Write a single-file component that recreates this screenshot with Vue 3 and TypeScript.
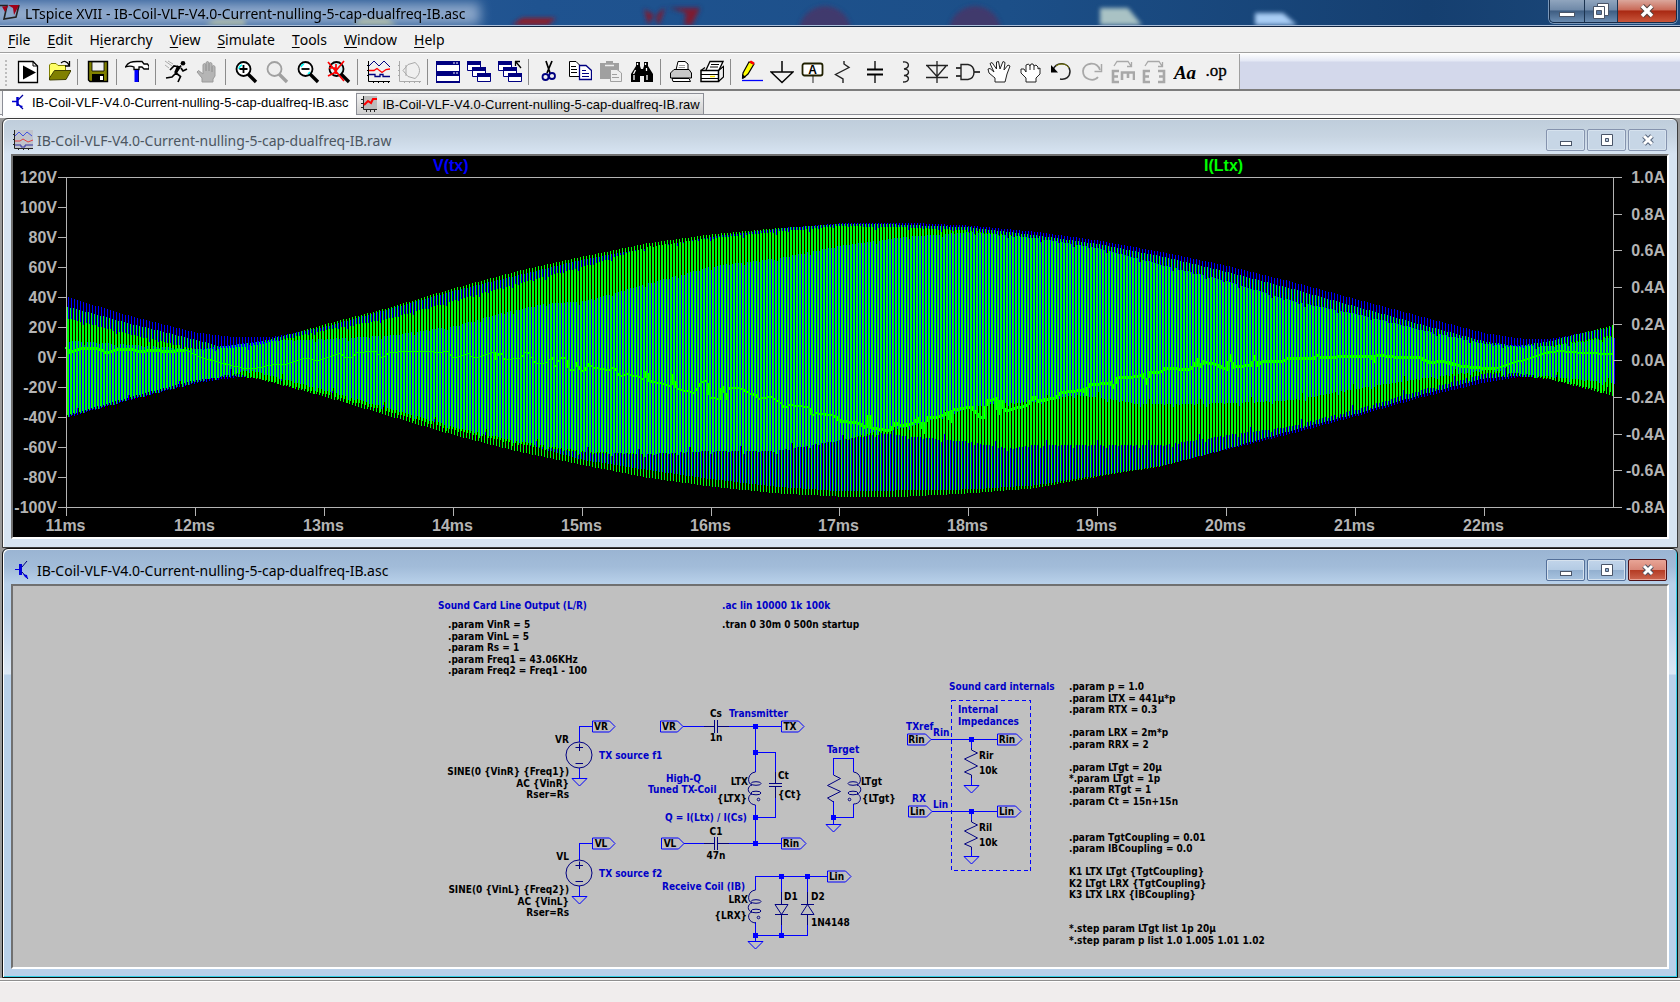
<script setup lang="ts">
type Point = [number, number]
interface Menu { pre: string; key: string; post: string }
interface Tool { name: string; art: string; gapAfter?: boolean }
interface Label { x: number; y: number; t: string; c?: 'b' | 'k'; a?: 'start' | 'middle' | 'end' }
interface Flag { x: number; y: number; w: number; t: string }

const docName = 'IB-Coil-VLF-V4.0-Current-nulling-5-cap-dualfreq-IB'

const menus: Menu[] = [
  { pre: '', key: 'F', post: 'ile' },
  { pre: '', key: 'E', post: 'dit' },
  { pre: 'H', key: 'i', post: 'erarchy' },
  { pre: '', key: 'V', post: 'iew' },
  { pre: '', key: 'S', post: 'imulate' },
  { pre: '', key: 'T', post: 'ools' },
  { pre: '', key: 'W', post: 'indow' },
  { pre: '', key: 'H', post: 'elp' },
]

const lens = (stroke: string, glass: string, inner: string) =>
  `<path d="M14 14L22 22" stroke="${stroke}" stroke-width="3.4"/><circle cx="9.5" cy="9" r="7" fill="${glass}" stroke="${stroke}" stroke-width="1.8"/>${inner}`
const cascade = (extra: string) =>
  `<g fill="#fff" stroke="#000080" stroke-width="1"><path d="M0.5 1.5h13v9h-13z"/><path d="M5.5 7.5h13v9h-13z"/><path d="M10.5 13.5h13v8h-13z"/></g><g fill="#000080"><path d="M0 1h14v4H0zM5 7h14v4H5zM10 13h14v4H10z"/></g>${extra}`
const handArt = (fill: string, stroke: string) =>
  `<path d="M7 22V18L2 12L3.500 10.500L8 14V4.500L9.500 3.500L11 4.500V11V2.500L12.500 1.500L14 2.500V11V3.500L15.500 2.500L17 3.500V12V6.500L18.500 5.500L20 6.500V16L18 19V22z" fill="${fill}" stroke="${stroke}"/>`

const tools: Tool[] = [
  { name: 'Run schematic', art: '<path d="M2.500 1.500H17L21.500 6V22.500H2.500z" fill="#fff" stroke="#000" stroke-width="1.300"/><path d="M17 1.500V6H21.500" fill="none" stroke="#000"/><path d="M7 5.500L20 12.500L7 19.500z"/>' },
  { name: 'Open', gapAfter: true, art: '<path d="M2.500 20V5L4 3.500H9L11 5.500H18.500V10" fill="#ffff66" stroke="#808000"/><path d="M2.500 20V18L7.500 10.500H24L19 19.500z" fill="#808000" stroke="#404000"/><path d="M14 3C17 .5 20 1 22 5M22.500 1V6H18" fill="none" stroke="#000" stroke-width="1.300"/>' },
  { name: 'Save', gapAfter: true, art: '<path d="M2.500 1.500H21.500V21.500H4L2.500 20z" fill="#808000" stroke="#000" stroke-width="1.400"/><path d="M6 2H18V11H6z" fill="#efefef" stroke="#000" stroke-width=".8"/><path d="M6 14H18V21H6z"/><path d="M14 16H17V20H14z" fill="#fff"/>' },
  { name: 'Control panel', gapAfter: true, art: '<path d="M0.500 7C3 2 7 1.500 12 1.500H17L19 4H22.500L24 6V9H19L17 7H14V9.500H9V7C6 5.500 3 6 0.500 7z" fill="#fff" stroke="#000" stroke-width="1.300"/><path d="M9.500 10H13.500V22H9.500z" fill="#0000ff"/><path d="M13.500 10V22" stroke="#000080"/>' },
  { name: 'Run', art: '<circle cx="19" cy="3.200" r="2.300"/><path d="M17 5.500L12 13L16.500 16.500L14 22M12 13L8 17L2 18M16 7L10 6L6 10M17 8L19 11L23 9" fill="none" stroke="#000" stroke-width="1.700"/><path d="M14.500 6L11.500 13" stroke="#000" stroke-width="3"/><path d="M1 1L8 6M4 1L9 4M1 5L5 8" stroke="#999" stroke-width=".8"/>' },
  { name: 'Halt', gapAfter: true, art: handArt('#b5b5b5', '#9a9a9a') },
  { name: 'Zoom in', art: lens('#000', '#fff', '<path d="M5 9a4.500 4.500 0 0 1 3-4" fill="none" stroke="#00ffff" stroke-width="1.500"/><path d="M9.500 5V13M5.500 9H13.500" stroke="#000" stroke-width="1.800"/>') },
  { name: 'Pan', art: lens('#a0a0a0', '#eee', '') },
  { name: 'Zoom back', art: lens('#000', '#fff', '<path d="M5 7a4.500 4.500 0 0 1 3-3M12 14l2-2" fill="none" stroke="#00ffff" stroke-width="1.500"/><path d="M5.500 9H13.500" stroke="#000" stroke-width="1.800"/>') },
  { name: 'Zoom full extents', gapAfter: true, art: lens('#000', '#d8f4f4', '<path d="M1 2L17 21M17 1L7 13L1 16M2 8H9M9 4V14" fill="none" stroke="#ff0000" stroke-width="1.700"/>') },
  { name: 'Autorange', art: '<path d="M2.500 1V21.500H24M1 5.500H3M1 10.500H3M1 15.500H3M7.500 21V23M12.500 21V23M17.500 21V23M22.500 21V23" fill="none" stroke="#000"/><path d="M3 6L8 1L13 6L18 1L24 7" fill="none" stroke="#000080"/><path d="M3 10.500H8L11 8.500L16 12.500L20 9.500L24 9" fill="none" stroke="#ff0000" stroke-width="1.300"/><path d="M3 14.500H9V16.500H14V14.500H17V16.500H24" fill="none" stroke="#000080" stroke-width="1.300"/>' },
  { name: 'Nyquist', gapAfter: true, art: '<path d="M2.500 1V21.500H24M1 5.500H3M1 10.500H3M1 15.500H3M7.500 21V23M12.500 21V23M17.500 21V23M22.500 21V23" fill="none" stroke="#aaa"/><path d="M6 10.500L11 4.500L18 2.500C24 7 24 14 18 18.500L11 16.500zM9 5V16" fill="none" stroke="#aaa"/>' },
  { name: 'Tile windows', art: '<path d="M0.500 1.500H23.500V22.500H0.500z" fill="#fff" stroke="#000080"/><path d="M0 1H24V5H0zM0 11H24V16H0zM0 21H24V23H0z" fill="#000080"/><path d="M17 3H19M20 3H22M17 13H19M20 13H22" stroke="#fff"/>' },
  { name: 'Cascade', art: cascade('') },
  { name: 'Close all', gapAfter: true, art: cascade('<path d="M17 1.500H22M17.500 1V6M18 2L23 8" fill="none" stroke="#000" stroke-width="1.300"/>') },
  { name: 'Cut', art: '<path d="M9 1L13 13M15 1L10 13" stroke="#000" stroke-width="1.700"/><circle cx="8.500" cy="17" r="3" fill="none" stroke="#000080" stroke-width="1.800"/><circle cx="15" cy="16" r="3" fill="none" stroke="#000080" stroke-width="1.800"/>' },
  { name: 'Copy', art: '<path d="M1.500 1.500H8L12.500 6V16.500H1.500z" fill="#fff" stroke="#000"/><path d="M3 6.500H8M3 9.500H9M3 12.500H9" stroke="#000"/><path d="M11.500 5.500H18L23.500 10.500V19.500H11.500z" fill="#fff" stroke="#000080" stroke-width="1.300"/><path d="M14 10.500H18M14 13.500H21M14 16.500H21" stroke="#000080"/>' },
  { name: 'Paste', art: '<path d="M1 3H7V1H14V3H20V19H1z" fill="#a0a0a0"/><path d="M6 5.500H15" stroke="#eee" stroke-width="1.500"/><path d="M11.500 9.500H18L22.500 13V21.500H11.500z" fill="#eee" stroke="#a0a0a0"/><path d="M13 14.500H18M13 17.500H20" stroke="#a0a0a0"/>' },
  { name: 'Find', gapAfter: true, art: '<path d="M6 2H10V6L11 9H13L14 6V2H18V6L23 14V22H14V16H10V22H1V14L6 6z"/><path d="M7.500 3V5M15.500 3V5M5.500 10L3.500 14M16.500 8V11M4 15V20M17 15V20" stroke="#fff" stroke-width="1.300"/>' },
  { name: 'Print setup', art: '<path d="M7 10L9 1.500H16L19 4V10" fill="#fff" stroke="#000"/><path d="M1.500 13L5 9.500H20L22.500 13V18H1.500z" fill="#c8c8c8" stroke="#000"/><path d="M3 18.500H20L21.500 21.500H4z" fill="#fff" stroke="#000"/><path d="M10 5.500H16M9.500 7.500H16" stroke="#999"/>' },
  { name: 'Print', gapAfter: true, art: '<path d="M6 10L10 1.500H23L19 10" fill="#fff" stroke="#000" stroke-width="1.300"/><path d="M11 4.500H19M10 7H18" stroke="#000"/><path d="M1 10.500H18.500V21.500H1z" fill="#fff" stroke="#000" stroke-width="1.500"/><path d="M1 14.500H18M1 18.500H18M18.500 10.500L23.500 6.500V17L18.500 21.500M1 10.500L5 7.500" fill="none" stroke="#000" stroke-width="1.200"/><path d="M10 16.500H15" stroke="#ffe600" stroke-width="1.500"/>' },
  { name: 'Wire', art: '<path d="M3.500 18L4 13L10 2L15 4L9 14L4.500 18z" fill="#ffff00" stroke="#000" stroke-width="1.200"/><path d="M10 2L12 0.500L15.500 2.500L14.500 5z" fill="#ff0000"/><path d="M3 19V14L7 17z"/><path d="M3 20.500H24" stroke="#0000ff" stroke-width="1.300"/>' },
  { name: 'Ground', art: '<path d="M12 1V12M1 12H23L12 22.500z" fill="none" stroke="#000" stroke-width="1.500"/>' },
  { name: 'Label net', art: '<path d="M12 16V23" stroke="#555" stroke-width="1.300"/><rect x="1.500" y="3.500" width="20" height="12" rx="2" fill="#fff" stroke="#202000" stroke-width="1.800"/><text x="11.500" y="14" font-size="12" font-weight="bold" text-anchor="middle" font-family="Liberation Sans, sans-serif">A</text>' },
  { name: 'Resistor', art: '<path d="M12 1V4L17 7.500L3.500 14.500L11 19V23" fill="none" stroke="#222" stroke-width="1.400"/>' },
  { name: 'Capacitor', art: '<path d="M12 1V10M12 15V23" stroke="#000" stroke-width="1.300"/><path d="M4 9.500H20M4 14.500H20" stroke="#000" stroke-width="2"/>' },
  { name: 'Inductor', art: '<path d="M9 2C16 1 16 8 10 9C16 9 16 15 10 15.500C16 16 16 22 9 22" fill="none" stroke="#222" stroke-width="1.400"/>' },
  { name: 'Diode', art: '<path d="M12 1V23M1 5.500H23M1 17.500H23M2.500 6L12 16.500L21 6" fill="none" stroke="#222" stroke-width="1.300"/>' },
  { name: 'Component', art: '<path d="M0 8H5M0 16H5M18 12H24" stroke="#000" stroke-width="1.400"/><path d="M5 4.500H12C20 6 20 18 12 19.500H5z" fill="#eee" stroke="#222" stroke-width="1.400"/>' },
  { name: 'Move', art: '<path d="M8 22V18L2 13L1 9L3 8.500L7 12L3 3.500L5 2.500L9.500 9L9.500 2L11.500 1.500L13 9L16 1.500L18 2.500L17 10L21 5L23 6L20 14L18 22z" fill="#fff" stroke="#222"/>' },
  { name: 'Drag', art: '<path d="M8 22V18L3 13L3 9L6 9L8 12V5L10.500 4L12 6L13 4L15 4L16 6L18 5L20 7V9L22 8L22 14L18 18V22z" fill="#fff" stroke="#222"/><path d="M12 6V10M16 6V10" stroke="#222"/>' },
  { name: 'Undo', art: '<path d="M4 10C7 1 20 2 21 11C21 17 17 20 11 19" fill="none" stroke="#222" stroke-width="1.500"/><path d="M7 6C11 3 17 3 20 8" fill="none" stroke="#808000"/><path d="M2 5V12.500H9z"/>' },
  { name: 'Redo', art: '<path d="M20 10C17 1 4 2 3 11C3 20 14 22 18 17" fill="none" stroke="#a8a8a8" stroke-width="1.800"/><path d="M21.500 4V11.500H14.500" fill="none" stroke="#a8a8a8" stroke-width="1.500"/>' },
  { name: 'Rotate', art: '<path d="M3 6L6 1.500H17L20 6M20.500 2V6.500H16" fill="none" stroke="#a8a8a8" stroke-width="1.300"/><path d="M8 11H2V22H8M2 16.500H7M11 20V12.500H23V20M17 12V18" fill="none" stroke="#a8a8a8" stroke-width="2.600"/>' },
  { name: 'Mirror', art: '<path d="M3 6L6 1.500H17L20 6M20.500 2V6.500H16" fill="none" stroke="#a8a8a8" stroke-width="1.300"/><path d="M8 11H2V22H8M2 16.500H7M16 11H22V22H16M22 16.500H17" fill="none" stroke="#a8a8a8" stroke-width="2.600"/>' },
  { name: 'Text', art: '<text x="12" y="19" font-size="19" font-weight="bold" font-style="italic" text-anchor="middle" font-family="Liberation Serif, serif">Aa</text>' },
  { name: 'SPICE directive', art: '<text x="12" y="16" font-size="17" stroke="#000" stroke-width=".3" text-anchor="middle" font-family="Liberation Serif, serif">.op</text>' },
]

/* ---- waveform pane ---- */
const X0 = 66.5
const MS = 128.9
const leftAxis = Array.from({ length: 12 }, (_, i) => ({ y: 177.5 + i * 30, t: `${120 - i * 20}V` }))
const rightAxis = Array.from({ length: 10 }, (_, i) => ({ y: Math.round(177 + (i * 330) / 9) + 0.5, t: `${((10 - i * 2) / 10).toFixed(1)}A` }))
const timeAxis = Array.from({ length: 12 }, (_, i) => ({ x: Math.floor(X0 + i * MS) + 0.5, t: `${11 + i}ms` }))

// Envelope curves: time in ms against thirds of a pixel below the pane's top
const env: Record<string, Point[]> = {
  gTop: [[11, 500], [11.5, 552], [12, 600], [12.2, 620], [12.5, 605], [12.7, 586], [13, 553], [13.5, 503], [14, 445], [14.5, 393], [15, 350], [15.5, 310], [16, 283], [16.5, 265], [17, 252], [17.4, 253], [18, 262], [18.5, 285], [19, 312], [19.5, 350], [20, 396], [20.5, 446], [21, 500], [21.5, 553], [22, 605], [22.25, 618], [22.5, 604], [23, 555]],
  bTop: [[11, 472], [11.5, 530], [12, 578], [12.3, 592], [12.6, 590], [13, 560], [14, 452], [15, 358], [16, 290], [16.6, 262], [17, 250], [17.5, 248], [18, 257], [18.5, 275], [19, 302], [19.5, 337], [20, 378], [20.5, 426], [21, 478], [21.5, 530], [22, 580], [22.3, 597], [22.5, 597], [23, 560]],
  gInT: [[11, 535], [11.5, 585], [12, 628], [12.4, 620], [13, 570], [13.5, 535], [14, 482], [14.5, 430], [15, 380], [15.5, 320], [16, 294], [16.5, 275], [17, 258], [17.5, 262], [18, 272], [18.5, 294], [19, 325], [19.5, 376], [20, 425], [20.5, 484], [21, 522], [21.5, 570], [22, 612], [22.25, 620], [22.5, 618], [23, 585]],
  bInT: [[11, 602], [12, 628], [12.5, 602], [13, 597], [13.5, 586], [14, 558], [14.3, 525], [14.7, 490], [15, 484], [15.2, 462], [15.5, 430], [16, 378], [16.5, 355], [17, 316], [17.5, 290], [18, 276], [18.5, 294], [19, 325], [19.5, 376], [20, 425], [20.5, 484], [21, 522], [21.5, 570], [22, 612], [22.5, 618], [23, 590]],
  bInB: [[11, 828], [12, 725], [12.4, 690], [13, 752], [14, 862], [14.5, 905], [15, 935], [15.5, 942], [16, 932], [16.5, 932], [17, 900], [17.3, 872], [17.5, 862], [18, 803], [18.2, 790], [18.5, 786], [18.8, 765], [19, 772], [19.3, 792], [20, 790], [20.5, 780], [21, 745], [21.5, 715], [22, 690], [22.5, 710], [23, 730]],
  gInB: [[11, 822], [12, 720], [12.3, 700], [13, 762], [14, 870], [14.5, 912], [15, 937], [15.5, 942], [16, 932], [16.5, 932], [17, 900], [17.3, 880], [17.6, 892], [18, 905], [18.3, 926], [18.5, 915], [19, 915], [19.5, 915], [20, 885], [20.5, 858], [21, 808], [21.5, 750], [22, 700], [22.3, 700], [23, 760]],
  bBot: [[11, 832], [11.5, 778], [12, 729], [12.3, 712], [12.5, 708], [13, 752], [14, 862], [14.5, 908], [15, 960], [15.5, 990], [16, 1018], [16.5, 1040], [17, 1054], [18, 1048], [18.5, 1036], [19, 1006], [19.5, 976], [20, 928], [20.5, 880], [21, 828], [21.5, 772], [22, 727], [22.25, 712], [22.5, 708], [23, 735]],
  gBot: [[11, 826], [11.5, 770], [12, 720], [12.3, 708], [12.5, 718], [13, 770], [13.5, 828], [14, 885], [14.5, 935], [15, 975], [15.5, 1013], [16, 1040], [16.5, 1060], [17, 1070], [17.5, 1070], [18, 1060], [18.5, 1045], [19, 1010], [19.5, 978], [20, 926], [20.5, 872], [21, 822], [21.5, 765], [22, 715], [22.25, 708], [22.5, 718], [23, 768]],
}
function sample(name: string, t: number): number {
  const pts = env[name]
  let i = 0
  while (i < pts.length - 2 && pts[i + 1][0] < t) i++
  const [ta, ya] = pts[i]
  const [tb, yb] = pts[i + 1]
  return Math.round(140 + (ya + ((yb - ya) * (t - ta)) / (tb - ta)) / 3)
}
const wobble = (i: number) => (i % 17 === 3 ? -5 : i % 11 === 5 ? 3 : (i * 7) % 5 === 0 ? 1 : 0)
const vbar = (px: number, a: number, b: number) => (b > a ? `M${px} ${a}h1V${b}h-1z` : '')
let blue = ''
let green = ''
for (let x = 67, i = 0; x <= 1612; x += 3, i++) {
  const t = 11 + (x - X0) / MS
  const w = wobble(i)
  const gBot = sample('gBot', t)
  const outer = Math.max(gBot, sample('bBot', t))
  const bInT = sample('bInT', t) + Math.max(w, 0)
  const bInB = Math.min(sample('bInB', t) + w, outer)
  const gInB = Math.min(Math.max(sample('gInB', t) + w, bInB), outer)
  blue += vbar(x + 1, sample('bTop', t), sample('bBot', t)) + vbar(x + 2, bInT, bInB)
  green += vbar(x, sample('gTop', t), gBot) + vbar(x + 1, sample('gInT', t) + Math.max(w, 0), gInB)
}

const traceA: Point[] = [[66, 347], [70, 352], [85, 348], [97, 348], [107, 353], [115, 350], [130, 349], [139, 352], [153, 350], [168, 352], [186, 350]]
const traceB: Point[] = [[186, 350], [200, 357], [221, 363], [243, 368], [254, 369], [271, 365], [286, 364], [296, 361], [307, 358], [318, 361], [329, 357], [341, 353], [345, 358], [352, 357], [357, 353], [375, 351], [382, 358], [389, 353], [407, 351], [432, 351], [436, 353], [448, 351], [452, 358], [462, 356], [468, 353], [473, 358], [479, 357], [495, 352], [496, 360], [500, 351], [505, 360], [521, 358], [527, 351], [536, 364], [546, 363], [552, 357], [555, 367], [560, 358]]
const traceC: Point[] = [[560, 358], [566, 358], [569, 370], [574, 370], [577, 363], [581, 371], [585, 370], [589, 364], [594, 368], [610, 370], [614, 367], [620, 377], [626, 374], [639, 377], [644, 380], [647, 370], [649, 381], [664, 384], [671, 387], [673, 377], [677, 389], [694, 393], [701, 383], [707, 380], [710, 398], [720, 399], [722, 384], [726, 398], [729, 388], [740, 388], [753, 395], [755, 393], [758, 399], [771, 397], [781, 403], [785, 408], [789, 405], [809, 407], [812, 416], [816, 413], [835, 416]]
const traceD: Point[] = [[835, 416], [840, 421], [858, 423], [866, 428], [869, 415], [871, 428], [890, 431], [896, 423], [901, 426], [912, 424], [918, 419], [924, 430], [927, 418], [939, 417], [948, 413], [951, 423], [953, 410], [971, 407], [980, 417], [984, 417], [987, 401], [996, 399], [999, 415], [1001, 400], [1005, 411], [1021, 407], [1028, 405], [1034, 397], [1039, 401], [1056, 398], [1060, 393], [1083, 390], [1086, 393], [1089, 385], [1110, 383], [1114, 387], [1117, 378], [1134, 377], [1143, 375], [1147, 383], [1149, 373], [1161, 372], [1166, 368], [1190, 370], [1197, 361], [1199, 367], [1204, 362], [1213, 364], [1227, 369], [1230, 357], [1234, 367], [1252, 365], [1254, 357], [1258, 365], [1263, 361], [1284, 361], [1288, 358], [1315, 358], [1317, 355], [1320, 357], [1338, 357], [1370, 356], [1374, 360], [1376, 355], [1395, 357], [1420, 358], [1431, 363], [1443, 361], [1459, 366], [1481, 368], [1493, 369]]
const traceE: Point[] = [[1493, 369], [1513, 363], [1531, 358], [1545, 353], [1559, 351], [1584, 353], [1613, 354]]
const line = (pts: Point[]) => pts.map((p) => p.join(',')).join(' ')
const traces = [
  { w: 3, p: line(traceA) }, { w: 1, p: line(traceB) }, { w: 2, p: line(traceC) }, { w: 3, p: line(traceD) }, { w: 2, p: line(traceE) },
]

/* ---- schematic pane ---- */
const directives: [number, string][] = [
  [690, '.param p = 1.0'], [702, '.param LTX = 441µ*p'], [713, '.param RTX = 0.3'], [736, '.param LRX = 2m*p'], [748, '.param RRX = 2'],
  [771, '.param LTgt = 20µ'], [782, '*.param LTgt = 1p'], [793, '.param RTgt = 1'], [805, '.param Ct = 15n+15n'], [841, '.param TgtCoupling = 0.01'],
  [852, '.param IBCoupling = 0.0'], [875, 'K1 LTX LTgt {TgtCoupling}'], [887, 'K2 LTgt LRX {TgtCoupling}'], [898, 'K3 LTX LRX {IBCoupling}'],
  [932, '*.step param LTgt list 1p 20µ'], [944, '*.step param p list 1.0 1.005 1.01 1.02'],
]
const labels: Label[] = [
  { x: 438, y: 609, t: 'Sound Card Line Output (L/R)', c: 'b' },
  { x: 448, y: 628, t: '.param VinR = 5' }, { x: 448, y: 640, t: '.param VinL = 5' }, { x: 448, y: 651, t: '.param Rs = 1' },
  { x: 448, y: 663, t: '.param Freq1 = 43.06KHz' }, { x: 448, y: 674, t: '.param Freq2 = Freq1 - 100' },
  { x: 722, y: 609, t: '.ac lin 10000 1k 100k', c: 'b' }, { x: 722, y: 628, t: '.tran 0 30m 0 500n startup' },
  { x: 569, y: 743, t: 'VR', a: 'end' }, { x: 569, y: 775, t: 'SINE(0 {VinR} {Freq1})', a: 'end' }, { x: 569, y: 787, t: 'AC {VinR}', a: 'end' }, { x: 569, y: 798, t: 'Rser=Rs', a: 'end' },
  { x: 599, y: 759, t: 'TX source f1', c: 'b' },
  { x: 569, y: 860, t: 'VL', a: 'end' }, { x: 569, y: 893, t: 'SINE(0 {VinL} {Freq2})', a: 'end' }, { x: 569, y: 905, t: 'AC {VinL}', a: 'end' }, { x: 569, y: 916, t: 'Rser=Rs', a: 'end' },
  { x: 599, y: 877, t: 'TX source f2', c: 'b' },
  { x: 716, y: 717, t: 'Cs', a: 'middle' }, { x: 729, y: 717, t: 'Transmitter', c: 'b' }, { x: 716, y: 741, t: '1n', a: 'middle' },
  { x: 666, y: 782, t: 'High-Q', c: 'b' }, { x: 648, y: 793, t: 'Tuned TX-Coil', c: 'b' },
  { x: 748, y: 785, t: 'LTX', a: 'end' }, { x: 747, y: 802, t: '{LTX}', a: 'end' }, { x: 778, y: 779, t: 'Ct' }, { x: 778, y: 798, t: '{Ct}' },
  { x: 665, y: 821, t: 'Q = I(Ltx) / I(Cs)', c: 'b' }, { x: 716, y: 835, t: 'C1', a: 'middle' }, { x: 716, y: 859, t: '47n', a: 'middle' },
  { x: 662, y: 890, t: 'Receive Coil (IB)', c: 'b' }, { x: 748, y: 903, t: 'LRX', a: 'end' }, { x: 747, y: 919, t: '{LRX}', a: 'end' },
  { x: 784, y: 900, t: 'D1' }, { x: 811, y: 900, t: 'D2' }, { x: 811, y: 926, t: '1N4148' },
  { x: 827, y: 753, t: 'Target', c: 'b' }, { x: 861, y: 785, t: 'LTgt' }, { x: 862, y: 802, t: '{LTgt}' },
  { x: 949, y: 690, t: 'Sound card internals', c: 'b' }, { x: 958, y: 713, t: 'Internal', c: 'b' }, { x: 958, y: 725, t: 'Impedances', c: 'b' },
  { x: 906, y: 730, t: 'TXref', c: 'b' }, { x: 933, y: 736, t: 'Rin', c: 'b' }, { x: 979, y: 759, t: 'Rir' }, { x: 979, y: 774, t: '10k' },
  { x: 912, y: 802, t: 'RX', c: 'b' }, { x: 933, y: 808, t: 'Lin', c: 'b' }, { x: 979, y: 831, t: 'Ril' }, { x: 979, y: 846, t: '10k' },
  ...directives.map(([y, t]) => ({ x: 1069, y, t })),
]
const flags: Flag[] = [
  { x: 592.5, y: 726.5, w: 17, t: 'VR' }, { x: 660.5, y: 726.5, w: 17, t: 'VR' }, { x: 781.5, y: 726.5, w: 17, t: 'TX' },
  { x: 592.5, y: 843.5, w: 17, t: 'VL' }, { x: 661.5, y: 843.5, w: 17, t: 'VL' }, { x: 781.5, y: 843.5, w: 19, t: 'Rin' },
  { x: 827.5, y: 876.5, w: 18, t: 'Lin' }, { x: 907.5, y: 739.5, w: 18, t: 'Rin' }, { x: 997.5, y: 739.5, w: 19, t: 'Rin' },
  { x: 908.5, y: 811.5, w: 18, t: 'Lin' }, { x: 997.5, y: 811.5, w: 18, t: 'Lin' },
]
const junctions: Point[] = [[755, 726], [755, 752], [755, 817], [755, 843], [781, 876], [807, 876], [755, 935], [781, 935], [833, 817], [971, 739], [971, 811]]
const grounds: Point[] = [[579.5, 778.5], [579.5, 896.5], [755.5, 941.5], [833.5, 824.5], [971.5, 785.5], [971.5, 856.5]]
</script>

<template>
  <div class="app">
    <header class="titlebar">
      <svg class="backdrop" viewBox="0 0 1680 25" preserveAspectRatio="none" aria-hidden="true">
        <defs><filter id="soft" x="-20%" y="-60%" width="140%" height="220%"><feGaussianBlur stdDeviation="2" /></filter>
          <filter id="glow" x="-10%" y="-60%" width="120%" height="220%"><feGaussianBlur stdDeviation="6" /></filter></defs>
        <rect x="-10" y="3" width="490" height="22" fill="#b4c6df" opacity=".72" filter="url(#glow)" />
        <g filter="url(#soft)">
          <path d="M205 25h40v-5h-30zM352 25l10-6h25l10 6z" fill="#d9d9a0" opacity=".6" />
          <path d="M512 25l10-7h34l-8 7z" fill="#8c1a2c" />
          <path d="M644 9l10 6-6 10M665 8c-10 5-10 13-6 17M670 8h30l-8 17h-8l2-12z" fill="#7e1a33" stroke="#3b2f56" />
          <circle cx="825" cy="32" r="26" fill="#4a3566" opacity=".8" /><circle cx="975" cy="32" r="26" fill="#4a3566" opacity=".8" />
          <path d="M1100 25V8h28l14 17z" fill="#a9c2c4" /><path d="M1255 25V13h28l14 12z" fill="#a9cdf5" />
        </g>
      </svg>
      <svg class="logo" width="22" height="24" viewBox="0 0 22 24" aria-hidden="true">
        <path d="M0 4.500H7L4 18L16 16L19 4" fill="none" stroke="#222" stroke-width="1.600" /><path d="M2 5.500L8 5L5 11zM8 4H19L14 14L13 7z" fill="#a00018" />
      </svg>
      <h1>LTspice XVII - {{ docName }}.asc</h1>
      <div class="appbtns">
        <button aria-label="Minimize"><svg width="18" height="16" viewBox="0 0 18 16"><rect x="1.500" y="9.500" width="15" height="4" fill="#fff" stroke="#4a5568" /></svg></button>
        <button aria-label="Restore"><svg width="18" height="18" viewBox="0 0 18 18"><path d="M5.500 1.500h11v12h-11z" fill="#fff" stroke="#4a5568" /><path d="M1.500 4.500h11v12h-11z" fill="#fff" stroke="#4a5568" /><path d="M4.500 8.500h5v4h-5z" fill="#5b7ba4" stroke="#4a5568" /></svg></button>
        <button class="close" aria-label="Close"><svg width="18" height="16" viewBox="0 0 18 16"><path d="M4 3L14 13M14 3L4 13" stroke="#54433f" stroke-width="5.500" /><path d="M4 3L14 13M14 3L4 13" stroke="#fff" stroke-width="3.500" /></svg></button>
      </div>
    </header>

    <nav class="menu">
      <button v-for="m in menus" :key="m.pre + m.key + m.post">{{ m.pre }}<u>{{ m.key }}</u>{{ m.post }}</button>
    </nav>

    <div class="toolrow">
      <div class="toolbar" role="toolbar" aria-label="Main">
        <button v-for="t in tools" :key="t.name" :aria-label="t.name" :class="{ gap: t.gapAfter }">
          <svg width="24" height="24" viewBox="0 0 24 24" fill="#000" v-html="t.art"></svg>
        </button>
      </div>
    </div>

    <div class="tabs" role="tablist">
      <button class="tab on" role="tab" aria-selected="true">
        <svg width="16" height="16" viewBox="0 0 16 16" fill="none" aria-hidden="true"><path d="M0 7.500h5" stroke="#0000d0" stroke-width="1.500" /><path d="M5.500 3v9" stroke="#0000d0" stroke-width="2.500" /><path d="M6 6l5-5M6 10l5 5" stroke="#0000a0" stroke-width="1.300" /><path d="M7 11l4 1-2 2z" fill="#0000d0" /></svg>
        {{ docName }}.asc
      </button>
      <button class="tab" role="tab" aria-selected="false">
        <svg width="16" height="16" viewBox="0 0 16 16" fill="none" aria-hidden="true"><path d="M2 0h14v13H2z" fill="#bbb" /><path d="M2.500 0v13.500H16M0 3.500h2M0 7.500h2M0 11.500h2M5.500 13v3M9.500 13v3M13.500 13v3" stroke="#222" /><path d="M3 9l4-4 3 2 2-4h4" stroke="#f00" stroke-width="2" /></svg>
        {{ docName }}.raw
      </button>
    </div>

    <main class="mdi">
      <section class="win">
        <div class="caption">
          <svg class="ico" width="20" height="20" viewBox="0 0 20 20" fill="none" aria-hidden="true"><path d="M1 0h19v18H1z" fill="#bfc3cb" /><path d="M1.500 0v18.500H20M0 4.500h2M0 9.500h2M0 14.500h2M5.500 18v2M10.500 18v2M15.500 18v2" stroke="#222" /><path d="M2 6l4-4 4 4 4-4 5 4" stroke="#4050e0" /><path d="M2 11h5l3-2 5 3 5-2" stroke="#e04040" /><path d="M2 15h6v2h4v-2h8" stroke="#3030a0" /></svg>
          <h2>{{ docName }}.raw</h2>
          <div class="winbtns">
            <button aria-label="Minimize"><svg width="14" height="14" viewBox="0 0 14 14"><rect x="1.500" y="8.500" width="11" height="4" fill="#fff" stroke="#4a5568" /></svg></button>
            <button aria-label="Maximize"><svg width="14" height="14" viewBox="0 0 14 14"><path d="M1.500 1.500h11v11h-11z" fill="#fff" stroke="#4a5568" /><path d="M5.500 5.500h3v3h-3z" fill="#b9cbe0" stroke="#4a5568" /></svg></button>
            <button aria-label="Close"><svg width="14" height="14" viewBox="0 0 14 14"><path d="M3 3L11 11M11 3L3 11" stroke="#56657c" stroke-width="5" /><path d="M3 3L11 11M11 3L3 11" stroke="#fff" stroke-width="3" /></svg></button>
          </div>
        </div>
        <div class="canvas dark">
          <svg class="plot" viewBox="13 156 1654 381" role="img" aria-label="V(tx) and I(Ltx) against time">
            <g shape-rendering="crispEdges">
              <path :d="blue" fill="#0000ff" />
              <path :d="green" fill="#00ff00" />
            </g>
            <polyline v-for="(t, i) in traces" :key="i" :points="t.p" :stroke-width="t.w" stroke="#00ff00" fill="none" shape-rendering="crispEdges" />
            <path d="M58 177.500H1622M58 507.500H1622M66.500 177V508M1613.500 177V508" stroke="#b4b4b4" />
            <g class="axis">
              <g v-for="a in leftAxis" :key="a.t"><path :d="`M58 ${a.y}H66`" /><text x="57" :y="a.y + 5.5" text-anchor="end">{{ a.t }}</text></g>
              <g v-for="a in rightAxis" :key="a.t"><path :d="`M1614 ${a.y}H1622`" /><text x="1665" :y="a.y + 5.5" text-anchor="end">{{ a.t }}</text></g>
              <g v-for="a in timeAxis" :key="a.t"><path :d="`M${a.x} 508V516`" /><text :x="a.x - 1" y="531" text-anchor="middle">{{ a.t }}</text></g>
            </g>
            <text class="sig" x="433" y="171" fill="#0000ff">V(tx)</text>
            <text class="sig" x="1204" y="171" fill="#00ff00">I(Ltx)</text>
          </svg>
        </div>
      </section>

      <section class="win active">
        <div class="caption">
          <svg class="ico" width="20" height="20" viewBox="0 0 20 20" fill="none" aria-hidden="true"><path d="M2 9.500h5" stroke="#0000e0" /><path d="M7.500 4v11" stroke="#0000e0" stroke-width="3" /><path d="M9 7l5-6M9 12l6 7" stroke="#00007a" /><path d="M10 14l4 1 1 4-3-2z" fill="#0000e0" /></svg>
          <h2>{{ docName }}.asc</h2>
          <div class="winbtns">
            <button aria-label="Minimize"><svg width="14" height="14" viewBox="0 0 14 14"><rect x="1.500" y="8.500" width="11" height="4" fill="#fff" stroke="#4a5568" /></svg></button>
            <button aria-label="Maximize"><svg width="14" height="14" viewBox="0 0 14 14"><path d="M1.500 1.500h11v11h-11z" fill="#fff" stroke="#4a5568" /><path d="M5.500 5.500h3v3h-3z" fill="#8fb0d4" stroke="#4a5568" /></svg></button>
            <button class="close" aria-label="Close"><svg width="14" height="14" viewBox="0 0 14 14"><path d="M3 3L11 11M11 3L3 11" stroke="#4a5060" stroke-width="5" /><path d="M3 3L11 11M11 3L3 11" stroke="#fff" stroke-width="3" /></svg></button>
          </div>
        </div>
        <div class="canvas">
          <svg class="plot" viewBox="13 586 1654 381" role="img" aria-label="Schematic">
            <g fill="none" stroke="#0000ff" shape-rendering="crispEdges">
              <path d="M592 726.500H579.500V742M579.500 768V778M592 843.500H579.500V860M579.500 886V896" />
              <path d="M683 726.500H704M729 726.500H781M683 843.500H704M729 843.500H781M755.500 726V772M755.500 805V843M755.500 752.500H775.500V772M775.500 798V817.500H755.500" />
              <path d="M755.500 890V876.500H827M755.500 922V941M755.500 935.500H807.500V925M807.500 876V892M781.500 876V892M781.500 925V935" />
              <path d="M833.500 775V758.500H853.500V772M853.500 804V817.500H833.500M833.500 801V824M931 739.500H997M932 811.500H997M971.500 740V749M971.500 777V785M971.500 812V821M971.500 849V856" />
              <rect x="951.500" y="700.500" width="79" height="170" stroke-dasharray="4 3" />
            </g>
            <g fill="none" stroke="#0000ff"><path v-for="(g, i) in grounds" :key="i" :d="`M${g[0] - 7.5} ${g[1]}h15l-7.500 7.500z`" /></g>
            <g fill="#0000ff"><rect v-for="(j, i) in junctions" :key="i" :x="j[0] - 2" :y="j[1] - 2" width="5" height="5" /></g>
            <g fill="none" stroke="#000080">
              <path d="M704 726.500H715M718 726.500H729M704 843.500H715M718 843.500H729M714.500 720V733M717.500 720V733M714.500 837V850M717.500 837V850M769 783.500H782M769 786.500H782M775.500 772V783M775.500 787V798" />
              <g v-for="dy in [0, 118]" :key="dy" :transform="`translate(0 ${dy})`">
                <circle cx="579" cy="755" r="13" /><path d="M579.500 743.500V751M575.500 747.500H583M575.500 763.500H583" />
                <path d="M755.500 772C747 773 747 784 752 785C747 786 747 793 752 794C747 795 747 804 755.500 805" />
                <ellipse cx="756" cy="783.500" rx="5" ry="1.800" /><ellipse cx="756" cy="793" rx="5" ry="1.800" /><circle cx="758.500" cy="799.500" r="1.300" />
              </g>
              <path d="M853.500 772C862 773 862 784 857 785C862 786 862 793 857 794C862 795 862 804 853.500 804" />
              <ellipse cx="853" cy="783.500" rx="5" ry="1.800" /><ellipse cx="853" cy="793" rx="5" ry="1.800" /><circle cx="849.500" cy="799.500" r="1.300" />
              <path d="M833.500 775L840.500 778.500L827.500 785.500L840.500 791.500L827.500 798L833.500 802" />
              <path v-for="dy in [0, 72]" :key="dy" :transform="`translate(0 ${dy})`" d="M971.500 748V750L977.500 753L964.500 759L977.500 766L964.500 772L971.500 775V778" />
              <path d="M781.500 892V904.500M775 904.500H788L781.500 914.500zM775 914.500H788M781.500 914V925M807.500 892V904.500M801 904.500H814M807.500 904.500L801 914.500H814zM807.500 914V925" />
            </g>
            <g v-for="(f, i) in flags" :key="i">
              <path :d="`M${f.x} ${f.y - 5.5}h${f.w}l5.500 5.500l-5.500 5.500h-${f.w}z`" fill="#c0c0c0" stroke="#0000ff" />
              <text class="lbl" :x="f.x + f.w / 2" :y="f.y + 3.5" text-anchor="middle">{{ f.t }}</text>
            </g>
            <text v-for="(l, i) in labels" :key="i" class="lbl" :class="{ blue: l.c === 'b' }" :x="l.x" :y="l.y" :text-anchor="l.a ?? 'start'">{{ l.t }}</text>
          </svg>
        </div>
      </section>
    </main>
    <footer class="status"></footer>
  </div>
</template>

<style>
html, body { margin: 0; background: #f0eded; }
</style>

<style scoped>
* { box-sizing: border-box; }
.app { display: flex; flex-direction: column; min-height: 100vh; font-family: "Noto Sans", "Open Sans", sans-serif; font-size: 14px; color: #000; background: #f0f0f0; }
button { border: 0; padding: 0; margin: 0; background: none; font: inherit; color: inherit; display: flex; align-items: center; justify-content: center; }
h1, h2 { margin: 0; font-weight: 400; font-size: 14px; white-space: nowrap; }
svg { display: block; flex: none; }

.titlebar { position: relative; display: flex; align-items: center; height: 27px; background: linear-gradient(90deg, #3a659f 0, #1f5390 32%, #1c4f88 60%, #153f70 85%, #1d4a7c 100%); border-bottom: 1px solid #10233f; box-shadow: inset 0 -1px #a9bdd8; overflow: hidden; }
.backdrop { position: absolute; left: 0; top: 0; width: 100%; height: 25px; }
.logo { position: relative; margin-right: 3px; }
.titlebar h1 { position: relative; flex: 1; }
.appbtns { position: relative; display: flex; align-self: flex-start; height: 23px; margin-right: 3px; border: 1px solid #152c4a; border-top: 0; border-radius: 0 0 5px 5px; overflow: hidden; box-shadow: 0 0 0 1px #7b98ba; }
.appbtns button { width: 35px; background: linear-gradient(#90a5be 0, #6f89a8 45%, #3e5d82 50%, #6a8bb0 100%); border-right: 1px solid #1b3350; }
.appbtns button + button { width: 33px; }
.appbtns button.close { width: 58px; border-right: 0; background: linear-gradient(#dba79c 0, #c96a58 45%, #a92812 50%, #c8553a 100%); }

.menu { display: flex; gap: 17px; height: 25px; padding-left: 8px; background: #f0f0f0; }
.menu u { text-underline-offset: 2px; }

.toolrow { display: flex; height: 39px; border-top: 1px solid #a0a0a0; border-bottom: 2px solid #7c7c7c; box-shadow: inset 0 1px #fff; background: linear-gradient(#ffffff 0, #e4e8f5 8px, #d3d8eb 9px); }
.toolbar { position: relative; display: flex; align-items: center; padding-left: 12px; padding-right: 8px; margin-top: 1px; background: #f0f0f0; border-right: 1px solid #a0a0a0; }
.toolbar::before { content: ""; position: absolute; left: 5px; top: 6px; bottom: 2px; width: 2px; background: repeating-linear-gradient(#bdbdbd 0 2px, transparent 2px 4px); }
.toolbar button { position: relative; width: 31px; height: 26px; }
.toolbar button.gap { margin-right: 8px; }
.toolbar button.gap::after { content: ""; position: absolute; right: -4px; top: 0; width: 1px; height: 26px; background: #8c8c8c; }

.tabs { display: flex; align-items: flex-start; height: 27px; padding: 0 2px; font-family: "Liberation Sans", Arial, sans-serif; font-size: 13px; background: linear-gradient(#f0f0f0 0 23px, #8c8e96 23px 24px, #fafafa 24px); }
.tab { height: 22px; margin-top: 2px; gap: 5px; padding: 0 3px 0 4px; border: 1px solid #8c8e96; background: linear-gradient(#f2f2f2, #cfcfcf); white-space: nowrap; }
.tab.on { height: 25px; margin-top: 0; gap: 4px; padding: 0 8px 3px 9px; border: 0; border-left: 1px solid #8c8e96; background: #fff; }

.mdi { display: flex; flex-direction: column; padding: 0 2px; background: #9a9a9a; }
.win { border: 1px solid #3c3c3c; border-radius: 6px 6px 0 0; padding: 0 8px 8px; background: linear-gradient(#bfcddb 0, #c8d5e2 18px, #d7e4f2 35px); box-shadow: inset 1px 1px #fff; }
.win.active { border-color: #111; background: linear-gradient(#9ab4d2 0, #a2bcd9 18px, #b9d1ea 35px, #b9d1ea 60px, #dce8f5 125px, #b9d1ea 126px); box-shadow: inset 1px 1px #fff, inset -1px -1px #34cfe6; }
.caption { display: flex; align-items: center; height: 35px; padding: 7px 2px 0; }
.caption .ico { margin-right: 4px; }
.caption h2 { flex: 1; color: #4c5661; }
.active .caption h2 { color: #000; }
.winbtns { display: flex; gap: 2px; }
.winbtns button { width: 39px; height: 22px; border: 1px solid #8593ae; border-radius: 2px; background: #c7d6e6; box-shadow: inset 0 0 0 1px #d6e2ee; }
.active .winbtns button { border-color: #54709a; background: linear-gradient(#c2d5ea 0, #b4cbe4 48%, #92afcf 50%, #a9c4e0 100%); }
.active .winbtns button.close { border-color: #4d1016; background: linear-gradient(#e8a596 0, #d98778 48%, #b43a22 50%, #cc6650 100%); box-shadow: inset 0 0 0 1px #e6a396; }
.canvas { border: 2px solid; border-color: #707070 #fff #fff #707070; background: #c0c0c0; }
.canvas.dark { background: #000; }
.plot { width: 100%; height: auto; }
.axis path { stroke: #b4b4b4; fill: none; }
.axis text, .sig { font: bold 16px "Liberation Sans", Arial, sans-serif; }
.axis text { fill: #b4b4b4; }
.lbl { font: bold 10px "DejaVu Sans Condensed", "DejaVu Sans", sans-serif; fill: #000; }
.lbl.blue { fill: #0000c8; }
.status { flex: 1; min-height: 20px; margin-top: 2px; border-top: 1px solid #8f8f8f; background: #f0eded; box-shadow: inset 0 1px #fff; }
</style>
